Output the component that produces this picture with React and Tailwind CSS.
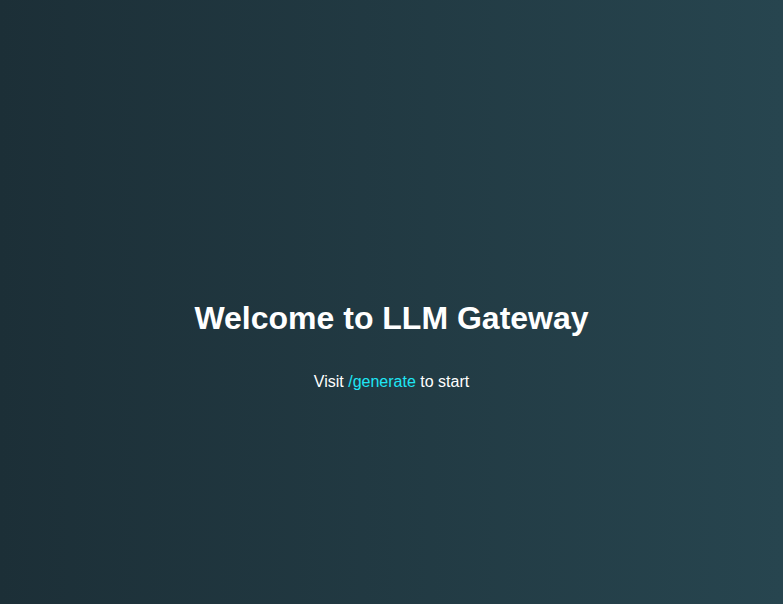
export default function App() {
  return (
    <div className="min-h-screen w-full bg-gradient-to-r from-[#1c2f37] to-[#27454f] font-['Liberation_Sans',Arial,sans-serif] text-white">
      <div className="flex flex-col items-center pt-[294px] text-center">
        <h1 className="text-[32px] font-bold leading-[48px]">Welcome to LLM Gateway</h1>
        <p className="mt-[28px] text-base leading-6">
          Visit <a href="/generate" className="text-[#1ee6f5]">/generate</a> to start
        </p>
      </div>
    </div>
  );
}
